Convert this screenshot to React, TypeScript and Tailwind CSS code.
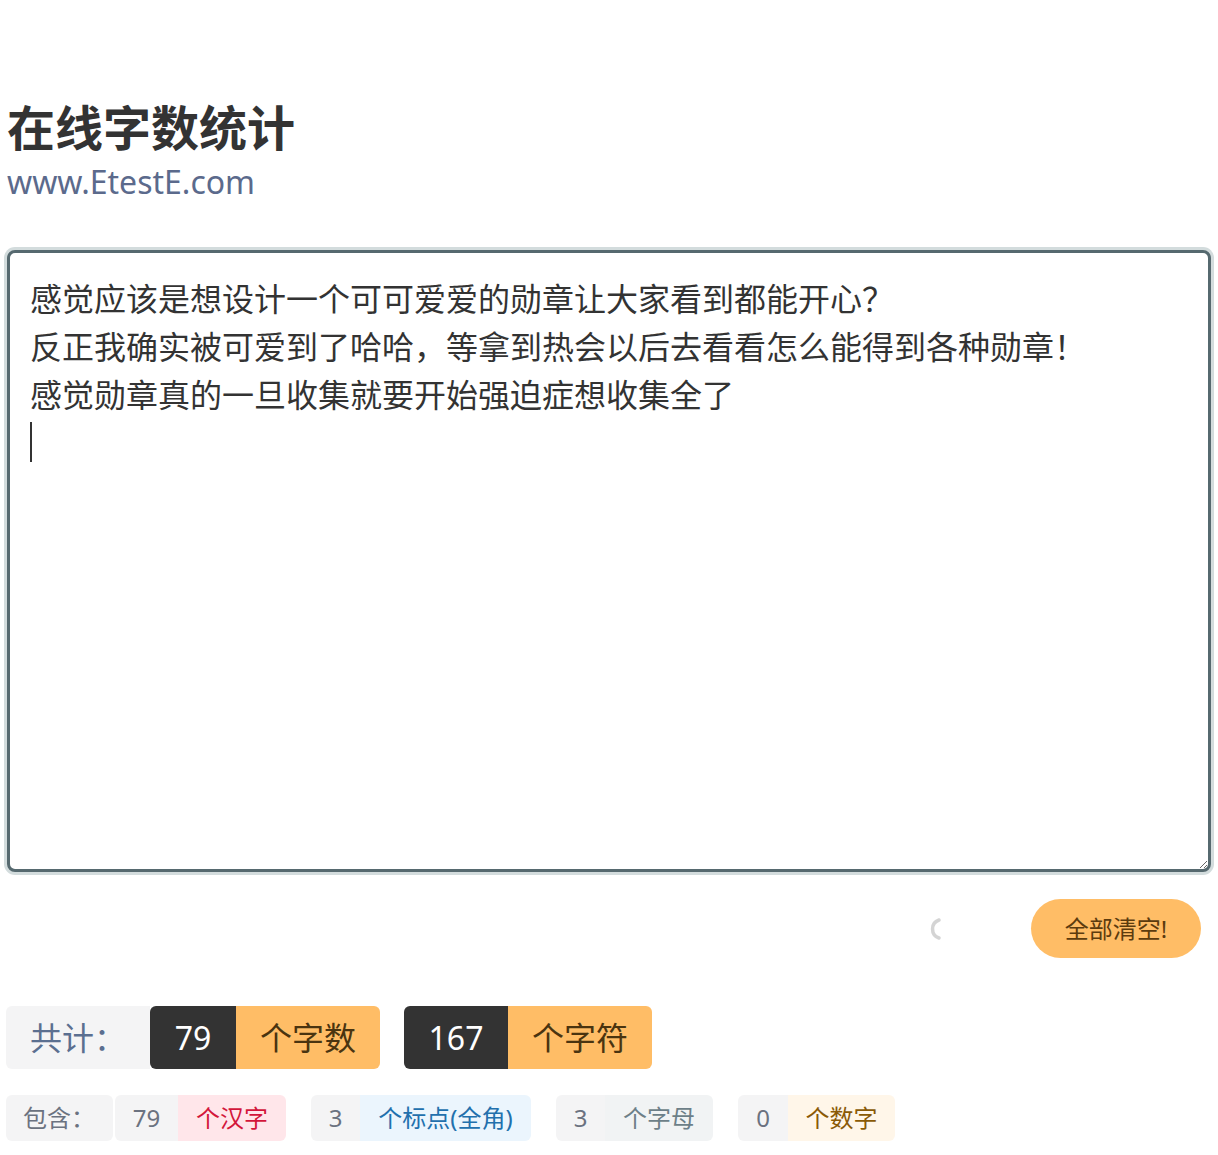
import { useRef, useState } from 'react'

const initialText =
    '感觉应该是想设计一个可可爱爱的勋章让大家看到都能开心？\n反正我确实被可爱到了哈哈，等拿到热会以后去看看怎么能得到各种勋章！\n感觉勋章真的一旦收集就要开始强迫症想收集全了\n'

// numbers as reported by the counter in the screenshot
const stats = { words: 79, chars: 167, hanzi: 79, punct: 3, letters: 3, digits: 0 }

function Spinner() {
    return (
        <svg width="18" height="24" viewBox="0 0 18 24" className="mr-[88px]">
            <path d="M14 3 A9.5 9.5 0 0 0 14 21" fill="none" stroke="#d4d4d4" strokeWidth="3.5" strokeLinecap="round" />
        </svg>
    )
}

export default function App() {
    const [text, setText] = useState(initialText)
    const ref = useRef<HTMLTextAreaElement>(null)
    const s = stats

    return (
        <div className="min-h-screen bg-white px-[7px] pt-[98px] font-['Noto_Sans','Noto_Sans_CJK_SC',sans-serif] text-[#333]">
            {/* header */}
            <h1 className="text-[48px] font-bold leading-[60px] text-[#333]">在线字数统计</h1>
            <div className="mt-[5px] text-[32px] leading-[38px] text-[#5b6a8c]">www.EtestE.com</div>

            {/* input */}
            <div className="relative mt-[49px]">
                <textarea
                    ref={ref}
                    value={text}
                    onChange={e => setText(e.target.value)}
                    className="block h-[622px] w-full rounded-lg border-[3px] border-[#56696f] bg-white px-[20px] pt-[22px] text-[32px] leading-[48px] text-[#333] outline-none ring-[3px] ring-[#d3dcdd]"
                />
                {/* caret on the empty last line */}
                {text === initialText && (
                    <div className="pointer-events-none absolute left-[23px] top-[172px] h-[40px] w-[2px] bg-[#333]" />
                )}
            </div>

            {/* actions */}
            <div className="mt-[27px] flex items-center justify-end pr-[10px]">
                <Spinner />
                <button
                    onClick={() => setText('')}
                    className="h-[59px] w-[170px] rounded-full bg-[#ffbd66] text-[24px] text-[#5c3b0e]"
                >
                    全部清空!
                </button>
            </div>

            {/* totals */}
            <div className="-ml-px mt-[48px] flex items-center text-[32px]">
                <div className="flex h-[63px] w-[144px] items-center rounded-l-md bg-[#f4f4f5] pl-[24px] text-[32px] text-[#5b6f90]">
                    共计：
                </div>
                <div className="flex h-[63px] w-[86px] items-center justify-center rounded-l-md bg-[#333] text-white">{s.words}</div>
                <div className="flex h-[63px] w-[144px] items-center justify-center rounded-r-md bg-[#ffbd66] text-[#4a3410]">个字数</div>
                <div className="ml-[24px] flex h-[63px] w-[104px] items-center justify-center rounded-l-md bg-[#333] text-white">{s.chars}</div>
                <div className="flex h-[63px] w-[144px] items-center justify-center rounded-r-md bg-[#ffbd66] text-[#4a3410]">个字符</div>
            </div>

            {/* breakdown */}
            <div className="-ml-px mt-[26px] flex items-center text-[24px]">
                <div className="flex h-[46px] w-[107px] items-center rounded-md bg-[#f4f4f5] pl-[17px] text-[#6b7280]">包含：</div>
                <div className="ml-[2px] flex h-[46px] w-[63px] items-center justify-center rounded-l-md bg-[#f4f4f5] text-[#6b7280]">{s.hanzi}</div>
                <div className="flex h-[46px] w-[108px] items-center justify-center rounded-r-md bg-[#ffe6ea] text-[#d3163a]">个汉字</div>

                <div className="ml-[25px] flex h-[46px] w-[49px] items-center justify-center rounded-l-md bg-[#f4f4f5] text-[#6b7280]">{s.punct}</div>
                <div className="flex h-[46px] w-[171px] items-center justify-center rounded-r-md bg-[#ebf5fd] text-[#2270ad]">个标点(全角)</div>

                <div className="ml-[25px] flex h-[46px] w-[49px] items-center justify-center rounded-l-md bg-[#f4f4f5] text-[#6b7280]">{s.letters}</div>
                <div className="flex h-[46px] w-[108px] items-center justify-center rounded-r-md bg-[#f1f3f4] text-[#6d7f88]">个字母</div>

                <div className="ml-[25px] flex h-[46px] w-[50px] items-center justify-center rounded-l-md bg-[#f4f4f5] text-[#6b7280]">{s.digits}</div>
                <div className="flex h-[46px] w-[107px] items-center justify-center rounded-r-md bg-[#fff6e9] text-[#8a5a06]">个数字</div>
            </div>
        </div>
    )
}
